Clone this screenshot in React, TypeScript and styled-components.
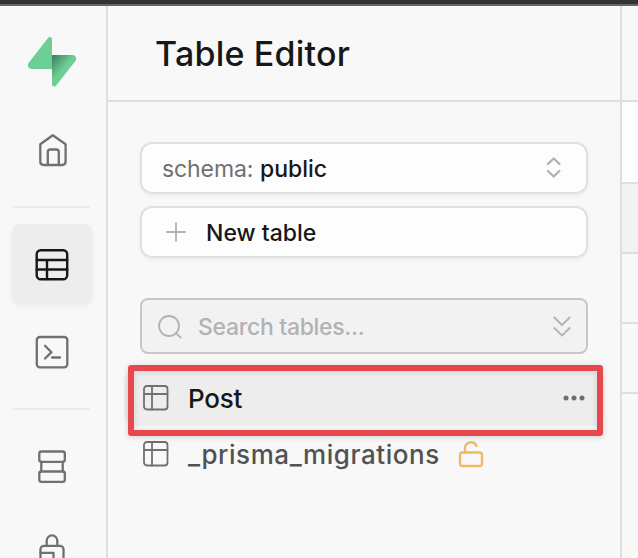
import React from "react";
import styled, { createGlobalStyle } from "styled-components";

const GlobalStyle = createGlobalStyle`
  * { box-sizing: border-box; }
  body { margin: 0; background: #f8f8f8; overflow: hidden; font-family: Inter, "Liberation Sans", sans-serif; }
  svg { display: block; flex: none; }
`;

const Window = styled.div`
  width: 638px;
  height: 558px;
  overflow: hidden;
  display: flex;
  flex-direction: column;
  background: #f8f8f8;
`;

const TitleBar = styled.div`
  height: 6px;
  flex: none;
  background: #333;
  border-bottom: 2px solid #656565;
`;

const Body = styled.div`
  flex: 1;
  min-height: 0;
  display: flex;
`;

const Rail = styled.nav`
  width: 108px;
  flex: none;
  overflow: hidden;
  border-right: 2px solid #dedede;
  padding: 31px 0 0 12px;
  display: flex;
  flex-direction: column;
`;

const Logo = styled.div`
  height: 50px;
  margin: 0 0 23px 16px;
  flex: none;
`;

const RailItem = styled.a<{ $active?: boolean }>`
  width: 80px;
  height: 80px;
  flex: none;
  display: flex;
  align-items: center;
  justify-content: center;
  border-radius: 8px;
  color: ${(p) => (p.$active ? "#171717" : "#707070")};
  background: ${(p) => (p.$active ? "#ededed" : "transparent")};
  box-shadow: ${(p) => (p.$active ? "0 2px 5px rgba(0,0,0,.05)" : "none")};
  & + & { margin-top: 8px; }
`;

const Divider = styled.div`
  width: 78px;
  height: 2px;
  flex: none;
  margin: 16px 0;
  background: #ececec;
`;

const Panel = styled.section`
  width: 514px;
  flex: none;
  border-right: 2px solid #dedede;
`;

const Header = styled.header`
  height: 96px;
  padding: 1px 0 0 47px;
  display: flex;
  align-items: center;
  border-bottom: 2px solid #dedede;
`;

const Title = styled.h1`
  margin: 0;
  font-size: 34px;
  font-weight: 450;
  letter-spacing: 0.2px;
  color: #171717;
  white-space: nowrap;
`;

const Controls = styled.div`
  padding: 40px 32px 0;
  display: flex;
  flex-direction: column;
  gap: 12px;
`;

const Button = styled.button`
  height: 52px;
  width: 448px;
  padding: 0 20px;
  display: flex;
  align-items: center;
  border: 2px solid #e0e0e0;
  border-radius: 12px;
  background: #fdfdfd;
  box-shadow: 0 2px 4px rgba(0, 0, 0, 0.05);
  font: 450 23px Inter, sans-serif;
  color: #171717;
  white-space: nowrap;
`;

const SchemaKey = styled.span`
  width: 98px;
  padding-top: 2px;
  text-align: left;
  font-weight: 400;
  letter-spacing: -0.1px;
  color: #707070;
`;

const Value = styled.span`
  flex: 1;
  padding-top: 2px;
  text-align: left;
`;

const NewLabel = styled.span`
  margin-left: 16px;
  padding-top: 2px;
`;

const Search = styled.div`
  height: 56px;
  margin-top: 28px;
  padding: 0 14px 0 15px;
  display: flex;
  align-items: center;
  border: 2px solid #c7c7c7;
  border-radius: 8px;
  background: #f2f2f2;
  color: #b2b2b2;
  font-size: 23px;
`;

const Placeholder = styled.span`
  flex: 1;
  margin-left: 15px;
  padding-top: 2px;
  font-weight: 450;
  letter-spacing: -0.3px;
`;

const TableList = styled.div`
  position: relative;
  margin: 16px 16px 0;
`;

const TableRow = styled.div<{ $selected?: boolean }>`
  height: 56px;
  padding: 0 18px 0 19px;
  display: flex;
  align-items: center;
  border-radius: 12px;
  color: ${(p) => (p.$selected ? "#171717" : "#525252")};
  background: ${(p) => (p.$selected ? "#ededed" : "transparent")};
`;

const TableName = styled.span<{ $grow?: boolean }>`
  margin-left: 19px;
  font-size: 26px;
  font-weight: 450;
  letter-spacing: ${(p) => (p.$grow ? "-0.2px" : "0.55px")};
  flex: ${(p) => (p.$grow ? 1 : "none")};
  white-space: nowrap;
`;

const LockSlot = styled.span`
  margin-left: 18px;
`;

const Highlight = styled.div`
  position: absolute;
  left: 4px;
  top: -5px;
  width: 475px;
  height: 71px;
  border: 6px solid #e5484d;
  border-radius: 3px;
  box-shadow: 0 1px 6px rgba(0, 0, 0, 0.16), inset 0 1px 6px rgba(0, 0, 0, 0.12);
`;

const Grid = styled.main`
  flex: 1;
`;

const Cell = styled.div<{ $h: number; $bg?: string }>`
  height: ${(p) => p.$h}px;
  background: ${(p) => p.$bg ?? "transparent"};
  border-bottom: 2px solid #dedede;
`;

type IconProps = { w: number; h: number; sw?: number; color?: string; children: React.ReactNode };

const Icon = ({ w, h, sw = 2.3, color = "currentColor", children }: IconProps) => (
  <svg width={w} height={h} viewBox={`0 0 ${w} ${h}`} fill="none" stroke={color} strokeWidth={sw} strokeLinecap="round" strokeLinejoin="round">
    {children}
  </svg>
);

const BoltLogo = () => (
  <svg width="48" height="50" viewBox="0 0 48 50">
    <defs>
      <linearGradient id="bolt" x1="21" y1="18" x2="36" y2="31" gradientUnits="userSpaceOnUse">
        <stop stopColor="#37704f" />
        <stop offset="1" stopColor="#6dce96" />
      </linearGradient>
    </defs>
    <path d="M24 18H44.200C47.700 18 49.300 21.500 47.200 24.200L28 48.700C26.700 50.200 24 49.500 24 47.300Z" fill="url(#bolt)" />
    <path d="M24 32H4C.300 32-1.200 28.300.900 25.600L20 .900C21.300-.800 24 0 24 2.200Z" fill="#6dce96" />
  </svg>
);

const TableGlyph = () => (
  <Icon w={26} h={26} sw={1.8} color="#707070">
    <rect x="1" y="1" width="23.500" height="23.500" rx="3" />
    <path d="M1 9H24.500M9 1V24.500" />
  </Icon>
);

export default function App() {
  return (
    <Window>
      <GlobalStyle />
      <TitleBar />
      <Body>
        <Rail>
          <Logo><BoltLogo /></Logo>
          <RailItem>
            <Icon w={40} h={40}>
              <path d="M8.300 14.200L20.800 5.300L33.600 14.200V31.500Q33.600 35 30.100 35H11.800Q8.300 35 8.300 31.500Z" />
              <path d="M15.800 35V22Q15.800 19.500 18.300 19.500H24.300Q26.800 19.500 26.800 22V35" />
            </Icon>
          </RailItem>
          <Divider />
          <RailItem $active>
            <Icon w={40} h={40} sw={2.4}>
              <rect x="4.700" y="6.200" width="30.500" height="29" rx="4" />
              <path d="M4.700 16H35.200M4.700 25.500H35.200M15 16V35" />
            </Icon>
          </RailItem>
          <RailItem>
            <Icon w={40} h={40}>
              <rect x="4.800" y="5" width="30.500" height="30.300" rx="3" />
              <path d="M13 13.700L19.500 20.200L13 26.500M20 25.500H28" />
            </Icon>
          </RailItem>
          <Divider />
          <RailItem>
            <Icon w={40} h={40}>
              <rect x="7.300" y="5.500" width="25.500" height="10.300" rx="2" />
              <rect x="7.300" y="25.500" width="25.500" height="10.300" rx="2" />
              <path d="M9.300 16V25.500M30.700 16V25.500" />
            </Icon>
          </RailItem>
          <RailItem>
            <Icon w={40} h={40}>
              <path d="M14.700 12V6.700A5.300 5.300 0 0 1 25.300 6.700V12" />
              <rect x="8.500" y="11.800" width="23" height="22" rx="3.500" />
              <path d="M8.500 18.800H21.500V26H8.500" />
            </Icon>
          </RailItem>
        </Rail>
        <Panel>
          <Header><Title>Table Editor</Title></Header>
          <Controls>
            <Button>
              <SchemaKey>schema:</SchemaKey>
              <Value>public</Value>
              <Icon w={24} h={24} color="#b2b2b2">
                <path d="M6 7.900L11.700 2.500L17.400 7.900M6 15L11.700 20.500L17.400 15" />
              </Icon>
            </Button>
            <Button>
              <Icon w={28} h={28} sw={1.8} color="#b2b2b2"><path d="M5 14H23M14 5V23" /></Icon>
              <NewLabel>New table</NewLabel>
            </Button>
            <Search>
              <Icon w={26} h={26} sw={1.8}>
                <circle cx="12" cy="13" r="10" /><path d="M19.300 20.300L23.800 24.700" />
              </Icon>
              <Placeholder>Search tables...</Placeholder>
              <Icon w={20} h={24} sw={1.8}>
                <path d="M2.300 3.500L10 11L17.700 3.500M2.300 14L10 21.500L17.700 14" />
              </Icon>
            </Search>
          </Controls>
          <TableList>
            <TableRow $selected>
              <TableGlyph />
              <TableName $grow>Post</TableName>
              <svg width="24" height="8" viewBox="0 0 24 8" fill="#707070">
                <circle cx="4" cy="4" r="2.500" /><circle cx="12" cy="4" r="2.500" /><circle cx="20" cy="4" r="2.500" />
              </svg>
            </TableRow>
            <TableRow>
              <TableGlyph />
              <TableName>_prisma_migrations</TableName>
              <LockSlot>
                <Icon w={26} h={28} color="#edba63">
                  <rect x="2" y="12.500" width="22" height="13.500" rx="2.500" />
                  <path d="M7 12.500V7.500A6 6 0 0 1 18.500 6" />
                </Icon>
              </LockSlot>
            </TableRow>
            <Highlight />
          </TableList>
        </Panel>
        <Grid>
          <Cell $h={96} />
          <Cell $h={82} $bg="#fdfdfd" />
          <Cell $h={70} $bg="#f2f2f2" />
          <Cell $h={70} />
          <Cell $h={70} />
        </Grid>
      </Body>
    </Window>
  );
}
